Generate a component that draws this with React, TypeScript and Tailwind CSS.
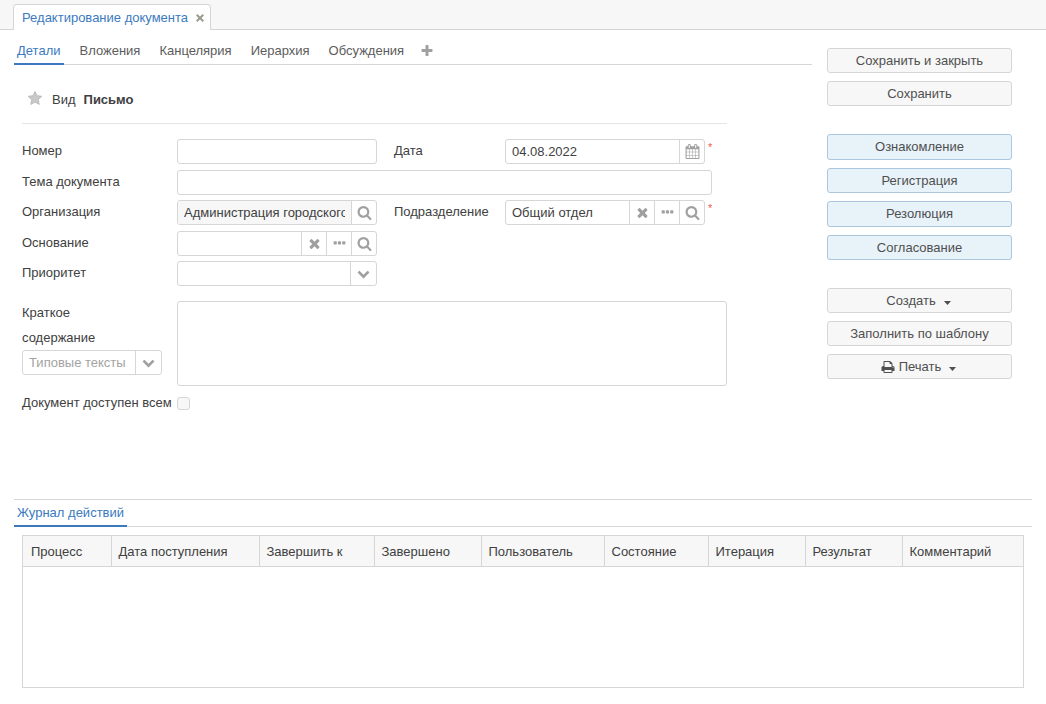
import type { ReactNode } from "react";

const ICONS = {
  times:
    "M1490 1322q0 40-28 68l-136 136q-28 28-68 28t-68-28l-294-294-294 294q-28 28-68 28t-68-28l-136-136q-28-28-28-68t28-68l294-294-294-294q-28-28-28-68t28-68l136-136q28-28 68-28t68 28l294 294 294-294q28-28 68-28t68 28l136 136q28 28 28 68t-28 68l-294 294 294 294q28 28 28 68z",
  search:
    "M1216 832q0-185-131.5-316.5t-316.5-131.5-316.5 131.5-131.5 316.5 131.5 316.5 316.5 131.5 316.5-131.5 131.5-316.5zm512 832q0 52-38 90t-90 38q-54 0-90-38l-343-342q-179 124-399 124-143 0-273.5-55.5t-225-150-150-225-55.5-273.5 55.5-273.5 150-225 225-150 273.5-55.5 273.5 55.5 225 150 150 225 55.5 273.5q0 220-124 399l343 343q37 37 37 90z",
  plus: "M1600 736v192q0 40-28 68t-68 28h-416v416q0 40-28 68t-68 28h-192q-40 0-68-28t-28-68v-416h-416q-40 0-68-28t-28-68v-192q0-40 28-68t68-28h416v-416q0-40 28-68t68-28h192q40 0 68 28t28 68v416h416q40 0 68 28t28 68z",
  chevron:
    "M1683 808l-742 741q-19 19-45 19t-45-19l-742-741q-19-19-19-45.5t19-45.5l166-165q19-19 45-19t45 19l531 531 531-531q19-19 45-19t45 19l166 165q19 19 19 45.5t-19 45.5z",
  ellipsis:
    "M576 736v192q0 40-28 68t-68 28h-192q-40 0-68-28t-28-68v-192q0-40 28-68t68-28h192q40 0 68 28t28 68zm512 0v192q0 40-28 68t-68 28h-192q-40 0-68-28t-28-68v-192q0-40 28-68t68-28h192q40 0 68 28t28 68zm512 0v192q0 40-28 68t-68 28h-192q-40 0-68-28t-28-68v-192q0-40 28-68t68-28h192q40 0 68 28t28 68z",
  calendar:
    "M192 1664h288v-288h-288v288zm352 0h320v-288h-320v288zm-352-352h288v-320h-288v320zm352 0h320v-320h-320v320zm-352-384h288v-288h-288v288zm736 736h320v-288h-320v288zm-384-736h320v-288h-320v288zm768 736h288v-288h-288v288zm-384-352h320v-320h-320v320zm-352-864v-288q0-13-9.5-22.5t-22.5-9.5h-64q-13 0-22.5 9.5t-9.5 22.5v288q0 13 9.5 22.5t22.5 9.5h64q13 0 22.5-9.5t9.5-22.5zm736 864h288v-320h-288v320zm-384-384h320v-288h-320v288zm384 0h288v-288h-288v288zm32-480v-288q0-13-9.5-22.5t-22.5-9.5h-64q-13 0-22.5 9.5t-9.5 22.5v288q0 13 9.5 22.5t22.5 9.5h64q13 0 22.5-9.5t9.5-22.5zm384-64v1280q0 52-38 90t-90 38h-1408q-52 0-90-38t-38-90v-1280q0-52 38-90t90-38h128v-96q0-66 47-113t113-47h64q66 0 113 47t47 113v96h384v-96q0-66 47-113t113-47h64q66 0 113 47t47 113v96h128q52 0 90 38t38 90z",
  print:
    "M448 1536h896v-256h-896v256zm0-640h896v-384h-160q-40 0-68-28t-28-68v-160h-640v640zm1152 64q0-26-19-45t-45-19-45 19-19 45 19 45 45 19 45-19 19-45zm128 0v416q0 13-9.5 22.5t-22.5 9.5h-224v160q0 40-28 68t-68 28h-960q-40 0-68-28t-28-68v-160h-224q-13 0-22.5-9.5t-9.5-22.5v-416q0-79 56.5-135.5t135.5-56.5h64v-544q0-40 28-68t68-28h672q40 0 88 20t76 48l152 152q28 28 48 76t20 88v256h64q79 0 135.5 56.5t56.5 135.5z",
};

type IconName = keyof typeof ICONS;

function Icon({ name, className = "size-[15px]" }: { name: IconName; className?: string }) {
  return (
    <svg viewBox="0 0 1792 1792" className={`shrink-0 fill-current ${className}`} aria-hidden="true">
      <path d={ICONS[name]} />
    </svg>
  );
}

function Star() {
  return (
    <svg viewBox="0 0 16 16" className="size-4" aria-hidden="true">
      <path
        d="M8 1.5l2 4.3 4.8.5-3.5 3.3.9 4.8L8 12.1l-4.200 2.300.900-4.800L1.200 6.300 6 5.800z"
        fill="#c9c9c9"
        stroke="#bdbdbd"
        strokeLinejoin="round"
      />
    </svg>
  );
}

function CloseIcon() {
  return (
    <svg viewBox="0 0 8 8" className="size-2" fill="none" stroke="currentColor" strokeWidth="2" aria-hidden="true">
      <path d="M.7.7l6.6 6.6M7.3.7L.7 7.3" />
    </svg>
  );
}

function Caret() {
  return (
    <svg viewBox="0 0 7 4" className="mt-1 mr-0.5 h-1 w-[7px] fill-current" aria-hidden="true">
      <path d="M0 0h7L3.5 4z" />
    </svg>
  );
}

const TABS = ["Детали", "Вложения", "Канцелярия", "Иерархия", "Обсуждения"];

const COLUMNS = [
  { title: "Процесс", width: 88 },
  { title: "Дата поступления", width: 148 },
  { title: "Завершить к", width: 115 },
  { title: "Завершено", width: 107 },
  { title: "Пользователь", width: 123 },
  { title: "Состояние", width: 104 },
  { title: "Итерация", width: 97 },
  { title: "Результат", width: 97 },
  { title: "Комментарий" },
];

const BOX = "rounded-[3px] border border-[#d6d6d6] bg-white";

function Label({ id, children }: { id: string; children: ReactNode }) {
  return (
    <label htmlFor={id} className="leading-[23px]">
      {children}
    </label>
  );
}

type FieldProps = {
  id: string;
  value?: string;
  placeholder?: string;
  readOnly?: boolean;
  actions?: { icon: IconName; label: string }[];
};

function Field({ id, value, placeholder, readOnly, actions = [] }: FieldProps) {
  return (
    <div className={`flex h-[25px] w-full overflow-hidden ${BOX}`}>
      <div className={`flex min-w-0 flex-1 px-1.5 ${readOnly ? "bg-[#f7f7f7]" : ""}`}>
        <input
          id={id}
          type="text"
          defaultValue={value}
          placeholder={placeholder}
          readOnly={readOnly}
          className="w-full min-w-0 bg-transparent outline-none placeholder:text-[#a3a3a3]"
        />
      </div>
      {actions.map(({ icon, label }) => (
        <button
          key={icon}
          type="button"
          aria-label={label}
          className={`flex shrink-0 items-center justify-center border-l border-[#d6d6d6] text-[#a0a0a0] ${icon === "chevron" ? "w-[26px]" : "w-[25px]"}`}
        >
          <Icon name={icon} className={icon === "chevron" ? "size-[13px]" : "size-[15px]"} />
        </button>
      ))}
    </div>
  );
}

function Required() {
  return <span className="absolute top-0 left-full ml-[3px] text-[11px] leading-4 text-[#ee5a5a]">*</span>;
}

function ActionButton({ children }: { children: ReactNode }) {
  return (
    <button
      type="button"
      className="flex h-[25px] items-center justify-center rounded-[3px] border border-[#d6d6d6] bg-[#f7f7f7] text-[#4f4f4f]"
    >
      {children}
    </button>
  );
}

function ProcessButton({ children }: { children: ReactNode }) {
  return (
    <button
      type="button"
      className="rounded-[3px] border border-[#abc7de] bg-[#e7f2f9] text-[#4f4f4f] odd:h-[26px] even:h-[25px]"
    >
      {children}
    </button>
  );
}

const CLEAR = { icon: "times", label: "Очистить" } as const;
const MORE = { icon: "ellipsis", label: "Выбрать" } as const;
const SEARCH = { icon: "search", label: "Найти" } as const;
const OPEN = { icon: "chevron", label: "Открыть список" } as const;
const CALENDAR = { icon: "calendar", label: "Календарь" } as const;

const ROW = "grid grid-cols-[155px_200px_111px_200px] odd:h-[31px] even:h-[30px]";

function DocumentForm() {
  return (
    <form className="px-2">
      <div className="flex h-[59px] max-w-[705px] items-center border-b border-[#e5e5e5] pt-3 pl-[5px]">
        <button type="button" aria-label="В избранное" className="pb-1">
          <Star />
        </button>
        <span className="ml-[9px]">Вид</span>
        <b className="ml-2">Письмо</b>
      </div>

      <div className="mt-[15px]">
        <div className={ROW}>
          <Label id="number">Номер</Label>
          <Field id="number" />
          <div className="pl-[17px]">
            <Label id="date">Дата</Label>
          </div>
          <div className="relative ml-[17px] w-[200px]">
            <Field id="date" value="04.08.2022" actions={[CALENDAR]} />
            <Required />
          </div>
        </div>
        <div className={ROW}>
          <Label id="subject">Тема документа</Label>
          <div className="w-[535px]">
            <Field id="subject" />
          </div>
        </div>
        <div className={ROW}>
          <Label id="org">Организация</Label>
          <Field id="org" value="Администрация городского округа" readOnly actions={[SEARCH]} />
          <div className="pl-[17px]">
            <Label id="unit">Подразделение</Label>
          </div>
          <div className="relative ml-[17px] w-[200px]">
            <Field id="unit" value="Общий отдел" actions={[CLEAR, MORE, SEARCH]} />
            <Required />
          </div>
        </div>
        <div className={ROW}>
          <Label id="reason">Основание</Label>
          <Field id="reason" actions={[CLEAR, MORE, SEARCH]} />
        </div>
        <div className={ROW}>
          <Label id="priority">Приоритет</Label>
          <Field id="priority" actions={[OPEN]} />
        </div>
      </div>

      <div className="mt-2 flex items-start">
        <div className="w-[155px] shrink-0">
          <label htmlFor="summary" className="block w-[100px] leading-[25px]">
            Краткое содержание
          </label>
          <div className="w-[140px]">
            <Field id="templates" placeholder="Типовые тексты" actions={[OPEN]} />
          </div>
        </div>
        <textarea id="summary" className={`mt-px block h-[85px] w-full max-w-[550px] resize-none ${BOX}`} />
      </div>

      <div className="mt-[5px] flex h-6 items-center">
        <label htmlFor="public" className="w-[155px] whitespace-nowrap">
          Документ доступен всем
        </label>
        <input
          id="public"
          type="checkbox"
          className="size-[13px] appearance-none rounded-[3px] border border-[#d6d6d6] bg-[#f7f7f7]"
        />
      </div>
    </form>
  );
}

function ActionLog() {
  return (
    <section className="mx-3.5 border-t border-[#d6d6d6]">
      <div className="flex h-[27px] border-b border-[#d6d6d6]">
        <button type="button" className="-mb-px border-b-2 border-[#3b7abf] px-[3px] text-[#3b7abf]">
          Журнал действий
        </button>
      </div>
      <div className="mx-2 mt-2 h-[153px] border border-[#d6d6d6]">
        <table className="w-full table-fixed border-collapse">
          <colgroup>
            {COLUMNS.map((col) => (
              <col key={col.title} style={{ width: col.width }} />
            ))}
          </colgroup>
          <thead>
            <tr className="h-[30px] border-b border-[#d6d6d6] bg-[#f7f7f7]">
              {COLUMNS.map((col) => (
                <th
                  key={col.title}
                  className="border-r border-[#d6d6d6] px-[7px] pt-0.5 text-left font-normal whitespace-nowrap first:pl-2 last:border-r-0"
                >
                  {col.title}
                </th>
              ))}
            </tr>
          </thead>
          <tbody />
        </table>
      </div>
    </section>
  );
}

export default function App() {
  return (
    <div className="min-h-screen bg-white font-['Liberation_Sans',Arial,sans-serif] text-[13px] leading-5 text-[#404040]">
      <header className="flex h-[30px] items-end border-b border-[#d6d6d6] bg-[#f7f7f7] pl-[13px]">
        <div className="-mb-px flex h-[26px] items-center rounded-t border border-b-0 border-[#d6d6d6] bg-white pr-1.5 pl-2">
          <button type="button" className="text-[#3b7abf]">
            Редактирование документа
          </button>
          <button type="button" aria-label="Закрыть" className="ml-2 text-[#9b9b8f]">
            <CloseIcon />
          </button>
        </div>
      </header>

      <div className="flex min-h-[469px] pl-3.5">
        <main className="min-w-0 flex-1">
          <nav className="flex h-[35px] border-b border-[#d6d6d6] pt-2 text-[#5c5c5c]">
            {TABS.map((tab, i) => (
              <button
                key={tab}
                type="button"
                className={`mr-[13px] -mb-px border-b-2 px-[3px] ${i === 0 ? "border-[#3b7abf] text-[#3b7abf]" : "border-transparent"}`}
              >
                {tab}
              </button>
            ))}
            <button type="button" aria-label="Добавить вкладку" className="text-[#a0a0a0]">
              <Icon name="plus" className="size-[14px]" />
            </button>
          </nav>
          <DocumentForm />
        </main>

        <aside className="mr-[34px] ml-[15px] flex w-[185px] shrink-0 flex-col gap-7 pt-[18px]">
          <div className="flex flex-col gap-2">
            <ActionButton>Сохранить и закрыть</ActionButton>
            <ActionButton>Сохранить</ActionButton>
          </div>
          <div className="flex flex-col gap-2">
            <ProcessButton>Ознакомление</ProcessButton>
            <ProcessButton>Регистрация</ProcessButton>
            <ProcessButton>Резолюция</ProcessButton>
            <ProcessButton>Согласование</ProcessButton>
          </div>
          <div className="flex flex-col gap-2">
            <ActionButton>
              <span className="mr-2">Создать</span>
              <Caret />
            </ActionButton>
            <ActionButton>Заполнить по шаблону</ActionButton>
            <ActionButton>
              <Icon name="print" className="size-[14px]" />
              <span className="mr-2 ml-1">Печать</span>
              <Caret />
            </ActionButton>
          </div>
        </aside>
      </div>

      <ActionLog />
    </div>
  );
}
